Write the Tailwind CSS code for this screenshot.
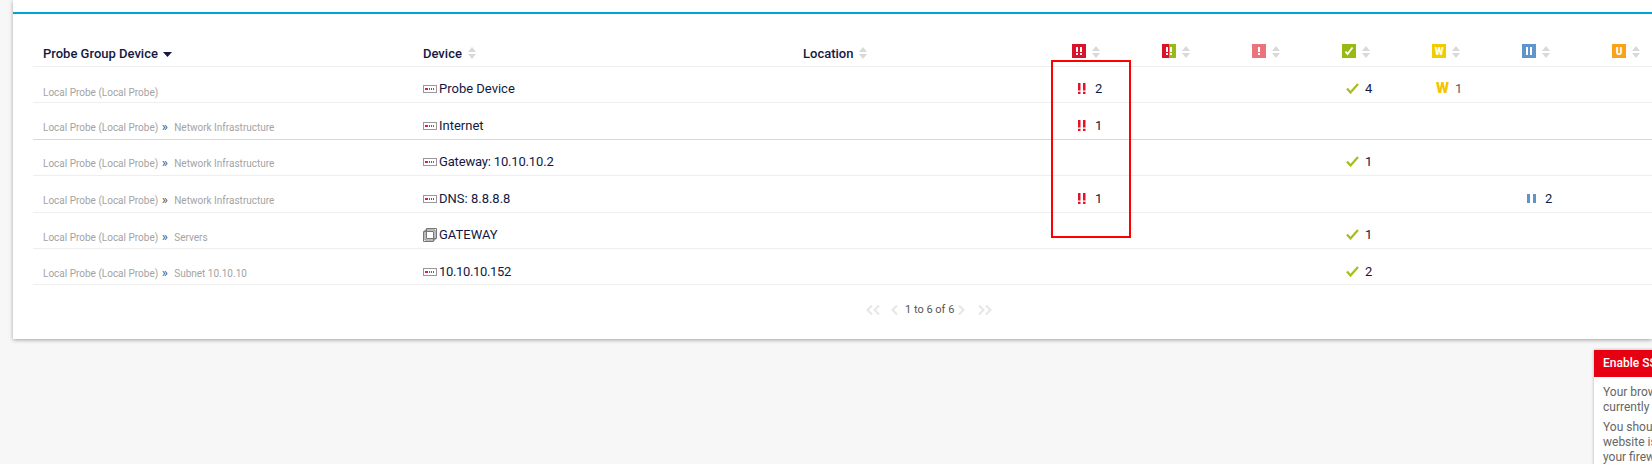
<!DOCTYPE html>
<html lang="en">
<head>
    <meta charset="UTF-8">
    <title>Devices</title>
    <script src="https://cdn.jsdelivr.net/npm/@tailwindcss/browser@4"></script>
</head>
<body class="relative h-[464px] overflow-hidden bg-[#f7f7f7] font-['Roboto',sans-serif] text-[#14183f]">
    <!-- main card -->
    <div class="ml-[13px] h-[339px] bg-white pt-[12px] shadow-[0_1px_4px_rgba(0,0,0,0.35)]">
        <div class="h-[355px] border-t-2 border-[#00a4dc] pl-[20px] pt-[30px]">
            <table class="w-[1659px] table-fixed border-collapse text-left text-[13px]">
                <colgroup>
                    <col class="w-[380px]"><col class="w-[380px]"><col class="w-[269px]">
                    <col class="w-[90px]"><col class="w-[90px]"><col class="w-[90px]"><col class="w-[90px]"><col class="w-[90px]"><col class="w-[90px]"><col class="w-[90px]">
                </colgroup>
                <thead>
                    <tr class="h-[22px] border-b border-[#eeeeee] align-top font-medium">
                        <th class="pl-[10px] font-medium">Probe Group Device <svg class="ml-[2px] inline h-[5px] w-[9px]" viewBox="0 0 9 5"><path d="M0 0h9L4.500 5z" fill="#14183f"/></svg></th>
                        <th class="pl-[10px] font-medium">Device <svg class="ml-[3px] inline h-[12px] w-[8px] align-[-1px]" viewBox="0 0 8 12"><path d="M4 0l4 5H0zM4 12L0 7h8z" fill="#d9d9d9"/></svg></th>
                        <th class="pl-[10px] font-medium">Location <svg class="ml-[2px] inline h-[12px] w-[8px] align-[-1px]" viewBox="0 0 8 12"><path d="M4 0l4 5H0zM4 12L0 7h8z" fill="#d9d9d9"/></svg></th>
                        <th class="pl-[10px]"><div class="flex items-start gap-[6px]">
                            <svg class="h-[14px] w-[14px]" viewBox="0 0 14 14"><rect width="14" height="14" fill="#d7142c"/><path d="M4 3h2v5H4zM8 3h2v5H8zM4 9h2v2H4zM8 9h2v2H8z" fill="#fff"/></svg>
                            <svg class="mt-[2px] h-[12px] w-[8px]" viewBox="0 0 8 12"><path d="M4 0l4 5H0zM4 12L0 7h8z" fill="#d9d9d9"/></svg>
                        </div></th>
                        <th class="pl-[10px]"><div class="flex items-start gap-[6px]">
                            <svg class="h-[14px] w-[14px]" viewBox="0 0 14 14"><rect width="7" height="14" fill="#d7142c"/><rect x="7" width="7" height="14" fill="#97bb14"/><path d="M4 3h2v5H4zM8 3h2v5H8zM4 9h2v2H4zM8 9h2v2H8z" fill="#fff"/></svg>
                            <svg class="mt-[2px] h-[12px] w-[8px]" viewBox="0 0 8 12"><path d="M4 0l4 5H0zM4 12L0 7h8z" fill="#d9d9d9"/></svg>
                        </div></th>
                        <th class="pl-[10px]"><div class="flex items-start gap-[6px]">
                            <svg class="h-[14px] w-[14px]" viewBox="0 0 14 14"><rect width="14" height="14" fill="#ea747c"/><path d="M6 3h2v5H6zM6 9h2v2H6z" fill="#fff"/></svg>
                            <svg class="mt-[2px] h-[12px] w-[8px]" viewBox="0 0 8 12"><path d="M4 0l4 5H0zM4 12L0 7h8z" fill="#d9d9d9"/></svg>
                        </div></th>
                        <th class="pl-[10px]"><div class="flex items-start gap-[6px]">
                            <svg class="h-[14px] w-[14px]" viewBox="0 0 14 14"><rect width="14" height="14" fill="#97bb14"/><path d="M3.500 7.500l2 2.500L10.500 3.500" fill="none" stroke="#fff" stroke-width="1.800"/></svg>
                            <svg class="mt-[2px] h-[12px] w-[8px]" viewBox="0 0 8 12"><path d="M4 0l4 5H0zM4 12L0 7h8z" fill="#d9d9d9"/></svg>
                        </div></th>
                        <th class="pl-[10px]"><div class="flex items-start gap-[6px]">
                            <span class="flex h-[14px] w-[14px] items-center justify-center bg-[#f2cc00] text-[10px] font-black text-white">W</span>
                            <svg class="mt-[2px] h-[12px] w-[8px]" viewBox="0 0 8 12"><path d="M4 0l4 5H0zM4 12L0 7h8z" fill="#d9d9d9"/></svg>
                        </div></th>
                        <th class="pl-[10px]"><div class="flex items-start gap-[6px]">
                            <svg class="h-[14px] w-[14px]" viewBox="0 0 14 14"><rect width="14" height="14" fill="#6095cb"/><path d="M4 3h2v8H4zM8 3h2v8H8z" fill="#fff"/></svg>
                            <svg class="mt-[2px] h-[12px] w-[8px]" viewBox="0 0 8 12"><path d="M4 0l4 5H0zM4 12L0 7h8z" fill="#d9d9d9"/></svg>
                        </div></th>
                        <th class="pl-[10px]"><div class="flex items-start gap-[6px]">
                            <span class="flex h-[14px] w-[14px] items-center justify-center bg-[#f9a11a] text-[10px] font-black text-white">U</span>
                            <svg class="mt-[2px] h-[12px] w-[8px]" viewBox="0 0 8 12"><path d="M4 0l4 5H0zM4 12L0 7h8z" fill="#d9d9d9"/></svg>
                        </div></th>
                    </tr>
                </thead>
                <tbody>
                    <tr class="h-[36px] border-b border-[#eeeeee] align-bottom">
                        <td class="pb-[2px] pl-[10px] text-[10px] text-[#a3a3a3]">Local Probe (Local Probe)</td>
                        <td class="pb-[3px] pl-[10px]"><div class="flex items-center gap-[2px]"><svg class="h-[8px] w-[14px]" viewBox="0 0 14 8"><rect x=".5" y=".5" width="13" height="7" fill="#fff" stroke="#999"/><path d="M2 3h3v2H2z" fill="#e5175f"/><path d="M6 3h1v2H6zM8 3h1v2H8zM10 3h1v2h-1z" fill="#666"/></svg>Probe Device</div></td>
                        <td></td>
                        <td class="pb-[3px] pl-[16px]"><div class="flex items-center gap-[9px]"><svg class="h-[11px] w-[8px]" viewBox="0 0 8 11"><path d="M0 0h2.500v7.500H0zM5 0h2.500v7.500H5zM0 8.700h2.500V11H0zM5 8.700h2.500V11H5z" fill="#e3122a"/></svg>2</div></td>
                        <td></td><td></td>
                        <td class="pb-[3px] pl-[14px]"><div class="flex items-center gap-[6px]"><svg class="h-[11px] w-[13px]" viewBox="0 0 13 11"><path d="M1 5.500l3.500 4L12 1" fill="none" stroke="#a8bd1a" stroke-width="2.200"/></svg>4</div></td>
                        <td class="pb-[3px] pl-[14px]"><div class="flex items-center gap-[6px]"><span class="text-[15px] leading-[15px] font-black text-[#f4c500]">W</span><span class="text-[#55586f]">1</span></div></td>
                        <td></td><td></td>
                    </tr>
                    <tr class="h-[37px] border-b border-[#d8d8d8] align-bottom">
                        <td class="pb-[4px] pl-[10px] text-[10px] text-[#a3a3a3]">Local Probe (Local Probe) <span class="ml-[1px] mr-[4px] text-[13px] leading-[13px] text-[#555555]">»</span> Network Infrastructure</td>
                        <td class="pb-[3px] pl-[10px]"><div class="flex items-center gap-[2px]"><svg class="h-[8px] w-[14px]" viewBox="0 0 14 8"><rect x=".5" y=".5" width="13" height="7" fill="#fff" stroke="#999"/><path d="M2 3h3v2H2z" fill="#e5175f"/><path d="M6 3h1v2H6zM8 3h1v2H8zM10 3h1v2h-1z" fill="#666"/></svg>Internet</div></td>
                        <td></td>
                        <td class="pb-[3px] pl-[16px]"><div class="flex items-center gap-[9px]"><svg class="h-[11px] w-[8px]" viewBox="0 0 8 11"><path d="M0 0h2.500v7.500H0zM5 0h2.500v7.500H5zM0 8.700h2.500V11H0zM5 8.700h2.500V11H5z" fill="#e3122a"/></svg>1</div></td>
                        <td></td><td></td><td></td><td></td><td></td><td></td>
                    </tr>
                    <tr class="h-[36px] border-b border-[#eeeeee] align-bottom">
                        <td class="pb-[4px] pl-[10px] text-[10px] text-[#a3a3a3]">Local Probe (Local Probe) <span class="ml-[1px] mr-[4px] text-[13px] leading-[13px] text-[#555555]">»</span> Network Infrastructure</td>
                        <td class="pb-[3px] pl-[10px]"><div class="flex items-center gap-[2px]"><svg class="h-[8px] w-[14px]" viewBox="0 0 14 8"><rect x=".5" y=".5" width="13" height="7" fill="#fff" stroke="#999"/><path d="M2 3h3v2H2z" fill="#e5175f"/><path d="M6 3h1v2H6zM8 3h1v2H8zM10 3h1v2h-1z" fill="#666"/></svg><span class="tracking-[-0.17px]">Gateway: 10.10.10.2</span></div></td>
                        <td></td><td></td><td></td><td></td>
                        <td class="pb-[3px] pl-[14px]"><div class="flex items-center gap-[6px]"><svg class="h-[11px] w-[13px]" viewBox="0 0 13 11"><path d="M1 5.500l3.500 4L12 1" fill="none" stroke="#a8bd1a" stroke-width="2.200"/></svg>1</div></td>
                        <td></td><td></td><td></td>
                    </tr>
                    <tr class="h-[37px] border-b border-[#eeeeee] align-bottom">
                        <td class="pb-[4px] pl-[10px] text-[10px] text-[#a3a3a3]">Local Probe (Local Probe) <span class="ml-[1px] mr-[4px] text-[13px] leading-[13px] text-[#555555]">»</span> Network Infrastructure</td>
                        <td class="pb-[3px] pl-[10px]"><div class="flex items-center gap-[2px]"><svg class="h-[8px] w-[14px]" viewBox="0 0 14 8"><rect x=".5" y=".5" width="13" height="7" fill="#fff" stroke="#999"/><path d="M2 3h3v2H2z" fill="#e5175f"/><path d="M6 3h1v2H6zM8 3h1v2H8zM10 3h1v2h-1z" fill="#666"/></svg>DNS: 8.8.8.8</div></td>
                        <td></td>
                        <td class="pb-[3px] pl-[16px]"><div class="flex items-center gap-[9px]"><svg class="h-[11px] w-[8px]" viewBox="0 0 8 11"><path d="M0 0h2.500v7.500H0zM5 0h2.500v7.500H5zM0 8.700h2.500V11H0zM5 8.700h2.500V11H5z" fill="#e3122a"/></svg>1</div></td>
                        <td></td><td></td><td></td><td></td>
                        <td class="pb-[3px] pl-[15px]"><div class="flex items-center gap-[9px]"><svg class="h-[9px] w-[9px]" viewBox="0 0 9 9"><path d="M0 0h3v9H0zM6 0h3v9H6z" fill="#5f94cb"/></svg>2</div></td>
                        <td></td>
                    </tr>
                    <tr class="h-[36px] border-b border-[#eeeeee] align-bottom">
                        <td class="pb-[3px] pl-[10px] text-[10px] text-[#a3a3a3]">Local Probe (Local Probe) <span class="ml-[1px] mr-[4px] text-[13px] leading-[13px] text-[#555555]">»</span> Servers</td>
                        <td class="pb-[3px] pl-[10px]"><div class="flex items-center gap-[2px]"><svg class="h-[14px] w-[14px]" viewBox="0 0 14 14"><path d="M.5 3.500h10v10H.5zM2 2h10v10H2zM3.500.5h10v10h-10z" fill="none" stroke="#777"/></svg>GATEWAY</div></td>
                        <td></td><td></td><td></td><td></td>
                        <td class="pb-[3px] pl-[14px]"><div class="flex items-center gap-[6px]"><svg class="h-[11px] w-[13px]" viewBox="0 0 13 11"><path d="M1 5.500l3.500 4L12 1" fill="none" stroke="#a8bd1a" stroke-width="2.200"/></svg>1</div></td>
                        <td></td><td></td><td></td>
                    </tr>
                    <tr class="h-[36px] border-b border-[#eeeeee] align-bottom">
                        <td class="pb-[3px] pl-[10px] text-[10px] text-[#a3a3a3]">Local Probe (Local Probe) <span class="ml-[1px] mr-[4px] text-[13px] leading-[13px] text-[#555555]">»</span> Subnet 10.10.10</td>
                        <td class="pb-[2px] pl-[10px]"><div class="flex items-center gap-[2px]"><svg class="h-[8px] w-[14px]" viewBox="0 0 14 8"><rect x=".5" y=".5" width="13" height="7" fill="#fff" stroke="#999"/><path d="M2 3h3v2H2z" fill="#e5175f"/><path d="M6 3h1v2H6zM8 3h1v2H8zM10 3h1v2h-1z" fill="#666"/></svg><span class="tracking-[-0.35px]">10.10.10.152</span></div></td>
                        <td></td><td></td><td></td><td></td>
                        <td class="pb-[2px] pl-[14px]"><div class="flex items-center gap-[6px]"><svg class="h-[11px] w-[13px]" viewBox="0 0 13 11"><path d="M1 5.500l3.500 4L12 1" fill="none" stroke="#a8bd1a" stroke-width="2.200"/></svg>2</div></td>
                        <td></td><td></td><td></td>
                    </tr>
                </tbody>
            </table>
            <!-- pager -->
            <div class="mt-[17px] flex items-center pl-[833px] text-[11px] text-[#555555]">
                <svg class="h-[10px] w-[15px]" viewBox="0 0 15 10"><path d="M6 .5L1.500 5 6 9.500M13 .5L8.500 5 13 9.500" fill="none" stroke="#e6e6e6" stroke-width="2"/></svg>
                <svg class="ml-[10px] h-[10px] w-[8px]" viewBox="0 0 8 10"><path d="M6 .5L1.500 5 6 9.500" fill="none" stroke="#e6e6e6" stroke-width="2"/></svg>
                <span class="ml-[6px]">1 to 6 of 6</span>
                <svg class="ml-[3px] h-[10px] w-[8px]" viewBox="0 0 8 10"><path d="M2 .5L6.500 5 2 9.500" fill="none" stroke="#e6e6e6" stroke-width="2"/></svg>
                <svg class="ml-[12px] h-[10px] w-[15px]" viewBox="0 0 15 10"><path d="M2 .5L6.500 5 2 9.500M9 .5L13.500 5 9 9.500" fill="none" stroke="#e6e6e6" stroke-width="2"/></svg>
            </div>
        </div>
    </div>

    <!-- annotation box -->
    <div class="absolute left-[1051px] top-[60px] h-[178px] w-[80px] border-2 border-[#ff0000]"></div>

    <!-- toast -->
    <div class="absolute left-[1594px] top-[350px] w-[300px] bg-white text-[12px] leading-[15px] text-[#666666] shadow-[0_0_3px_rgba(0,0,0,0.3)]">
        <div class="flex h-[27px] items-center bg-[#e60012] pl-[9px] font-medium text-white">Enable SSL encryption</div>
        <div class="px-[9px] pt-[8px]">
            <p class="whitespace-nowrap">Your browser connection is<br>currently not secure.</p>
            <p class="mt-[5px] whitespace-nowrap">You should enable SSL if this<br>website is reachable through<br>your firewall.</p>
        </div>
    </div>
</body>
</html>
